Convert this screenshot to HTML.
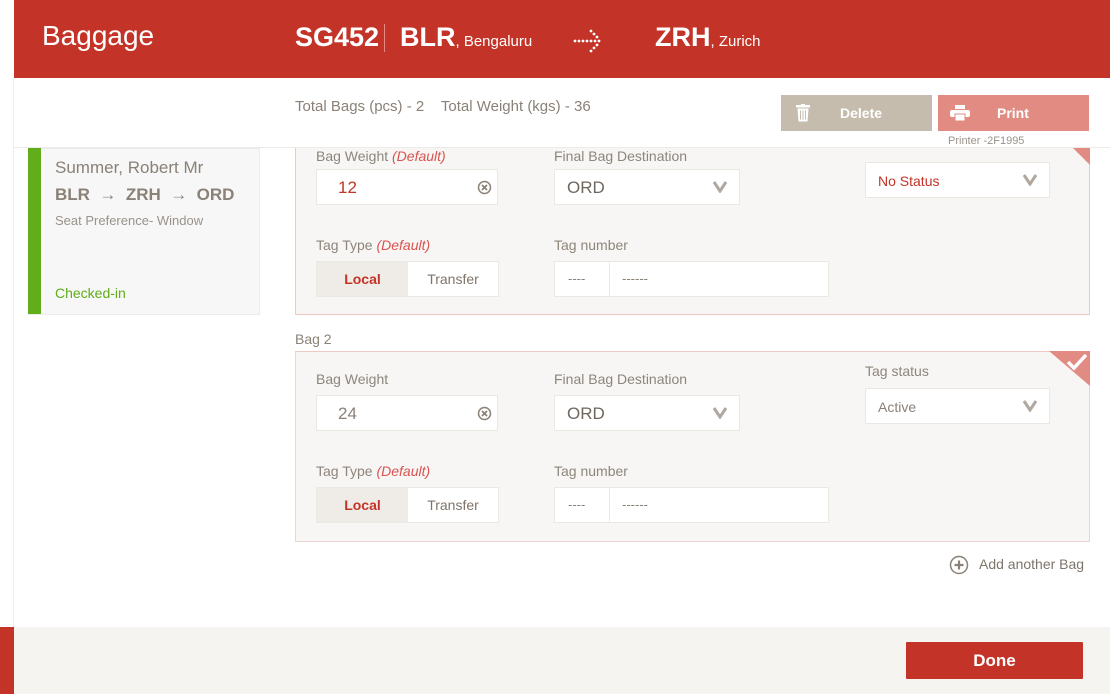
<!DOCTYPE html>
<html><head><meta charset="utf-8"><style>
*{box-sizing:border-box;margin:0;padding:0}
body{width:1110px;height:694px;position:relative;overflow:hidden;background:#fff;font-family:"Liberation Sans",sans-serif;color:#8a8177}
.a{position:absolute}
.hdr{left:14px;top:0;width:1096px;height:78px;background:#c43327;color:#fff}
.lbl{font-size:14px;color:#8d857b}
.lbl i{color:#d9534f}
.box{background:#fff;border:1px solid #ebe7e2}
.card{left:295px;width:795px;background:#f7f6f4;border:1px solid #e9d6d1}
.chev{position:absolute;right:12px;top:9px;width:14px;height:14px}
</style></head><body>
<div class="a" style="left:13px;top:78px;width:1px;height:549px;background:#f0eeeb"></div>
<div class="a hdr">
 <div class="a" style="left:28px;top:20px;font-size:28px">Baggage</div>
 <div class="a" style="left:281px;top:22px;font-size:27px;font-weight:bold">SG452</div>
 <div class="a" style="left:370px;top:24px;width:1px;height:28px;background:#e58a80"></div>
 <div class="a" style="left:386px;top:22px;font-size:27px;font-weight:bold">BLR<span style="font-size:15px;font-weight:normal">, Bengaluru</span></div>
 <svg class="a" style="left:559px;top:28px" width="32" height="26" viewBox="0 0 32 26" fill="#fff"><circle cx="2" cy="13" r="1.4"/><circle cx="6" cy="13" r="1.4"/><circle cx="10" cy="13" r="1.4"/><circle cx="14" cy="13" r="1.4"/><circle cx="18" cy="13" r="1.4"/><circle cx="22" cy="13" r="1.4"/><circle cx="26" cy="13" r="1.4"/><circle cx="18" cy="3" r="1.4"/><circle cx="21" cy="6" r="1.4"/><circle cx="24" cy="9" r="1.4"/><circle cx="24" cy="17" r="1.4"/><circle cx="21" cy="20" r="1.4"/><circle cx="18" cy="23" r="1.4"/></svg>
 <div class="a" style="left:641px;top:22px;font-size:27px;font-weight:bold">ZRH<span style="font-size:15px;font-weight:normal">, Zurich</span></div>
</div>

<!-- passenger -->
<div class="a" style="left:28px;top:148px;width:232px;height:167px;background:#f7f7f7;border:1px solid #ebebeb"></div>
<div class="a" style="left:28px;top:148px;width:13px;height:166px;background:#62ad1a"></div>
<div class="a" style="left:55px;top:158px;font-size:17px;color:#8a8177">Summer, Robert Mr</div>
<div class="a" style="left:55px;top:185px;font-size:17px;font-weight:bold;color:#8a8177">BLR&nbsp;&nbsp;→&nbsp;&nbsp;ZRH&nbsp;&nbsp;→&nbsp;&nbsp;ORD</div>
<div class="a" style="left:55px;top:213px;font-size:13px;color:#9a928a">Seat Preference- Window</div>
<div class="a" style="left:55px;top:285px;font-size:14px;color:#62ad1a">Checked-in</div>

<!-- bag 1 -->
<div class="a card" style="top:124px;height:191px;border-color:#eec9c3"></div>
<div class="a" style="left:1049px;top:124px;width:0;height:0;border-left:41px solid transparent;border-top:41px solid #e28b83"></div>
<div class="a lbl" style="left:316px;top:148px">Bag Weight <i>(Default)</i></div>
<div class="a box" style="left:316px;top:169px;width:182px;height:36px"><span class="a" style="left:21px;top:8px;font-size:17px;color:#c43327">12</span><svg class="a" style="left:160px;top:10px" width="15" height="15" viewBox="0 0 15 15"><circle cx="7.5" cy="7.5" r="6" fill="none" stroke="#8a8177" stroke-width="1.5"/><path d="M5 5l5 5M10 5l-5 5" stroke="#8a8177" stroke-width="1.8"/></svg></div>
<div class="a lbl" style="left:554px;top:148px">Final Bag Destination</div>
<div class="a box" style="left:554px;top:169px;width:186px;height:36px"><span class="a" style="left:12px;top:8px;font-size:17px;color:#6f665d">ORD</span><svg class="chev" viewBox="0 0 14 14"><path d="M1 3l6 9 6-9" fill="none" stroke="#b0a89e" stroke-width="3"/></svg></div>
<div class="a box" style="left:865px;top:162px;width:185px;height:36px"><span class="a" style="left:12px;top:10px;font-size:14px;color:#c43327">No Status</span><svg class="chev" viewBox="0 0 14 14"><path d="M1 3l6 9 6-9" fill="none" stroke="#b0a89e" stroke-width="3"/></svg></div>
<div class="a lbl" style="left:316px;top:237px">Tag Type <i>(Default)</i></div>
<div class="a box" style="left:316px;top:261px;width:183px;height:36px"><div class="a" style="left:0;top:0;width:91px;height:34px;background:#efebe7;color:#c43327;font-weight:bold;font-size:14px;text-align:center;line-height:34px">Local</div><div class="a" style="left:91px;top:0;width:90px;height:34px;font-size:14px;text-align:center;line-height:34px;color:#7e756b">Transfer</div></div>
<div class="a lbl" style="left:554px;top:237px">Tag number</div>
<div class="a box" style="left:554px;top:261px;width:275px;height:36px"><div class="a" style="left:54px;top:0;width:1px;height:34px;background:#ebe7e2"></div><span class="a" style="left:13px;top:9px;font-size:13px">----</span><span class="a" style="left:67px;top:9px;font-size:13px">------</span></div>

<!-- top summary bar -->
<div class="a" style="left:14px;top:78px;width:1096px;height:70px;background:#fff;border-bottom:1px solid #eeeae6"></div>
<div class="a" style="left:295px;top:98px;font-size:15px;color:#8a8177">Total Bags (pcs) - 2&nbsp;&nbsp;&nbsp;&nbsp;Total Weight (kgs) - 36</div>
<div class="a" style="left:781px;top:95px;width:151px;height:36px;background:#c5bcad;color:#fff;font-size:14px;font-weight:bold">
 <svg class="a" style="left:15px;top:9px" width="14" height="18" viewBox="0 0 14 18" fill="#fff"><rect x="0" y="1" width="14" height="2.5"/><rect x="5" y="0" width="4" height="2"/><path d="M1.5 4.5h11l-1 13h-9z"/><path d="M4.5 6.5v9M7 6.5v9M9.5 6.5v9" stroke="#c5bcad" stroke-width="1"/></svg>
 <span class="a" style="left:59px;top:10px">Delete</span></div>
<div class="a" style="left:938px;top:95px;width:151px;height:36px;background:#e28b83;color:#fff;font-size:14px;font-weight:bold">
 <svg class="a" style="left:12px;top:10px" width="20" height="16" viewBox="0 0 20 16" fill="#fff"><rect x="5" y="0" width="10" height="4"/><rect x="0" y="5" width="20" height="7" rx="2"/><rect x="5" y="9" width="10" height="7" fill="#fff" stroke="#e28b83" stroke-width="1"/></svg>
 <span class="a" style="left:59px;top:10px">Print</span></div>
<div class="a" style="left:948px;top:135px;font-size:11px;color:#9a928a">Printer -2F1995</div>

<!-- bag 2 -->
<div class="a" style="left:295px;top:331px;font-size:14px;color:#8a8177">Bag 2</div>
<div class="a card" style="top:351px;height:191px;border-top-color:#eec9c3"></div>
<div class="a" style="left:1049px;top:351px;width:0;height:0;border-left:41px solid transparent;border-top:35px solid #e28b83"></div>
<svg class="a" style="left:1066px;top:353px" width="22" height="18" viewBox="0 0 22 18"><path d="M2 9l6 6 12-13" fill="none" stroke="#fff" stroke-width="3.5"/></svg>
<div class="a lbl" style="left:316px;top:371px">Bag Weight</div>
<div class="a box" style="left:316px;top:395px;width:182px;height:36px"><span class="a" style="left:21px;top:8px;font-size:17px;color:#8a8177">24</span><svg class="a" style="left:160px;top:10px" width="15" height="15" viewBox="0 0 15 15"><circle cx="7.5" cy="7.5" r="6" fill="none" stroke="#8a8177" stroke-width="1.5"/><path d="M5 5l5 5M10 5l-5 5" stroke="#8a8177" stroke-width="1.8"/></svg></div>
<div class="a lbl" style="left:554px;top:371px">Final Bag Destination</div>
<div class="a box" style="left:554px;top:395px;width:186px;height:36px"><span class="a" style="left:12px;top:8px;font-size:17px;color:#6f665d">ORD</span><svg class="chev" viewBox="0 0 14 14"><path d="M1 3l6 9 6-9" fill="none" stroke="#b0a89e" stroke-width="3"/></svg></div>
<div class="a lbl" style="left:865px;top:363px">Tag status</div>
<div class="a box" style="left:865px;top:388px;width:185px;height:36px"><span class="a" style="left:12px;top:10px;font-size:14px;color:#8a8177">Active</span><svg class="chev" viewBox="0 0 14 14"><path d="M1 3l6 9 6-9" fill="none" stroke="#b0a89e" stroke-width="3"/></svg></div>
<div class="a lbl" style="left:316px;top:463px">Tag Type <i>(Default)</i></div>
<div class="a box" style="left:316px;top:487px;width:183px;height:36px"><div class="a" style="left:0;top:0;width:91px;height:34px;background:#efebe7;color:#c43327;font-weight:bold;font-size:14px;text-align:center;line-height:34px">Local</div><div class="a" style="left:91px;top:0;width:90px;height:34px;font-size:14px;text-align:center;line-height:34px;color:#7e756b">Transfer</div></div>
<div class="a lbl" style="left:554px;top:463px">Tag number</div>
<div class="a box" style="left:554px;top:487px;width:275px;height:36px"><div class="a" style="left:54px;top:0;width:1px;height:34px;background:#ebe7e2"></div><span class="a" style="left:13px;top:9px;font-size:13px">----</span><span class="a" style="left:67px;top:9px;font-size:13px">------</span></div>

<svg class="a" style="left:949px;top:555px" width="20" height="20" viewBox="0 0 20 20"><circle cx="10" cy="10" r="8.5" fill="none" stroke="#8a8177" stroke-width="1.5"/><path d="M10 5.5v9M5.5 10h9" stroke="#8a8177" stroke-width="2.2"/></svg>
<div class="a" style="left:979px;top:556px;font-size:14px;color:#7e756b">Add another Bag</div>

<!-- footer -->
<div class="a" style="left:0;top:627px;width:1110px;height:67px;background:#f5f4f1"></div>
<div class="a" style="left:0;top:627px;width:14px;height:67px;background:#c43327"></div>
<div class="a" style="left:906px;top:642px;width:177px;height:37px;background:#c43327;color:#fff;font-size:17px;font-weight:bold;text-align:center;line-height:37px;border-radius:1px">Done</div>
</body></html>
